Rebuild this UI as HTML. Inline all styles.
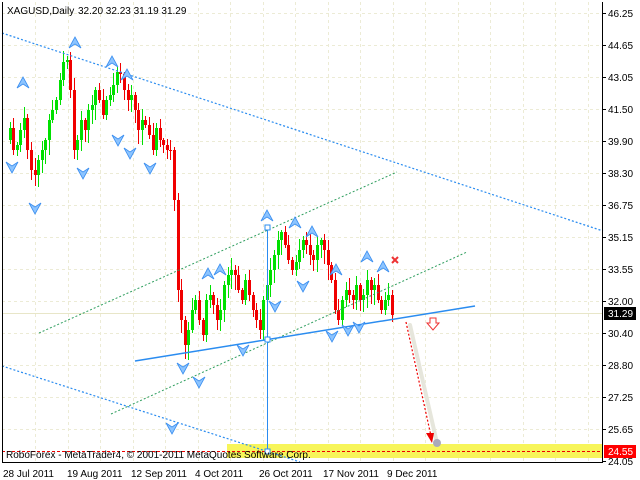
<!DOCTYPE html>
<html><head><meta charset="utf-8"><style>
html,body{margin:0;padding:0;background:#fff;width:640px;height:480px;overflow:hidden}
svg{display:block}
text{font-family:"Liberation Sans",Tahoma,sans-serif;font-size:10px;fill:#000}
</style></head><body>
<svg id="s" width="640" height="480" xmlns="http://www.w3.org/2000/svg">
<rect width="640" height="480" fill="#fff"/>
<g id="grid" stroke="#ecebd5" stroke-dasharray="3,3" stroke-width="1"></g>
<rect x="227" y="444" width="376" height="14" fill="#f7f55a"/>
<line x1="2" y1="451.5" x2="603" y2="451.5" stroke="#e00" stroke-dasharray="3,2"/>
<line x1="2" y1="313.5" x2="603" y2="313.5" stroke="#e8e6c8"/>
<g id="candles"></g>
<line x1="2" y1="33" x2="603" y2="231" stroke="#2a8cf0" stroke-dasharray="2,2" stroke-width="1.2"/>
<line x1="2" y1="366" x2="300" y2="462" stroke="#2a8cf0" stroke-dasharray="2,2" stroke-width="1.2"/>
<line x1="39" y1="333" x2="397" y2="172" stroke="#2e9e5e" stroke-dasharray="2,2"/>
<line x1="111" y1="414" x2="467" y2="252" stroke="#2e9e5e" stroke-dasharray="2,2"/>
<line x1="135" y1="361" x2="475" y2="306" stroke="#2a8cf0" stroke-width="1.5"/>
<line x1="267.5" y1="227" x2="267.5" y2="451" stroke="#2a8cf0" stroke-width="1"/>
<rect x="265" y="225" width="5" height="5" fill="#fff" stroke="#2a8cf0"/>
<rect x="265" y="337" width="5" height="5" fill="#fff" stroke="#2a8cf0"/>
<rect x="265" y="449" width="5" height="5" fill="#fff" stroke="#2a8cf0"/>
<g id="fr"></g>
<line x1="410" y1="325" x2="437" y2="443" stroke="#e6e6dc" stroke-width="4" stroke-linecap="round"/>
<circle cx="437" cy="443" r="4" fill="#aab"/>
<line x1="406" y1="322" x2="431" y2="436" stroke="#e00" stroke-dasharray="2,2" stroke-width="1.2"/>
<path d="M426,433 L434,433 L432,443 Z" fill="#e00"/>
<path d="M430,318 h6 v5 h3 l-6,7 l-6,-7 h3 z" fill="#fff" stroke="#e33"/>
<path d="M392,257 l6,6 M398,257 l-6,6" stroke="#e33" stroke-width="2"/>
<line x1="2.5" y1="2" x2="2.5" y2="462" stroke="#000"/>
<line x1="2" y1="462.5" x2="603" y2="462.5" stroke="#000"/>
<line x1="602.5" y1="2" x2="602.5" y2="463" stroke="#000"/>
<g id="ax"></g>
<rect x="604" y="307" width="32" height="13" fill="#000"/>
<text x="608" y="317" style="fill:#fff">31.29</text>
<rect x="604" y="445" width="32" height="13" fill="#f00"/>
<text x="608" y="455" style="fill:#fff">24.55</text>
<text x="7" y="14">XAGUSD,Daily</text>
<text x="78" y="14">32.20 32.23 31.19 31.29</text>
<text x="6" y="458">RoboForex - MetaTrader4, © 2001-2011 MetaQuotes Software Corp.</text>
<text x="3" y="477">28 Jul 2011</text>
<text x="67" y="477">19 Aug 2011</text>
<text x="131" y="477">12 Sep 2011</text>
<text x="195" y="477">4 Oct 2011</text>
<text x="259" y="477">26 Oct 2011</text>
<text x="323" y="477">17 Nov 2011</text>
<text x="387" y="477">9 Dec 2011</text>
</svg>
<script>
(function(){
var NS="http://www.w3.org/2000/svg";
function el(p,t,a){var e=document.createElementNS(NS,t);for(var k in a)e.setAttribute(k,a[k]);p.appendChild(e);return e;}
var g=document.getElementById("grid");
for(var x=35;x<600;x+=32.5)el(g,"line",{x1:Math.round(x)+.5,y1:2,x2:Math.round(x)+.5,y2:462});
var prices=["46.25","44.65","43.05","41.50","39.90","38.30","36.75","35.15","33.55","32.00","30.40","28.80","27.25","25.65","24.05"];
var ax=document.getElementById("ax");
prices.forEach(function(p,i){var y=13+i*32;
 if(i<14)el(g,"line",{x1:2,y1:y+.5,x2:602,y2:y+.5});
 el(ax,"line",{x1:603,y1:y+.5,x2:606,y2:y+.5,stroke:"#000"});
 var t=el(ax,"text",{x:608,y:y+4});t.textContent=p;});
var c=[140,128,150,145,130,118,150,170,175,160,150,140,120,110,100,80,62,60,90,150,140,120,130,110,105,90,100,115,100,95,85,72,74,90,100,95,110,130,120,125,135,150,128,140,145,150,150,200,290,320,345,330,310,300,320,335,300,295,305,320,310,285,275,270,275,290,300,280,295,310,320,330,300,285,270,255,240,232,245,260,270,262,250,240,245,255,260,245,240,250,265,280,310,320,300,290,295,300,285,300,295,280,290,285,300,310,300,295,315];
var cg=document.getElementById("candles");var n=c.length;var step=(392-6)/(n-1);
for(var i=1;i<n;i++){var o=c[i-1],cl=c[i];var x=Math.round(6+i*step);
 var up=cl<o;var col=up?"#00e000":"#f00000";var tp=Math.min(o,cl),bt=Math.max(o,cl);
 var w1=((i*37)%11)+2,w2=((i*53)%13)+3;
 el(cg,"line",{x1:x+.5,y1:tp-w1,x2:x+.5,y2:bt+w2,stroke:col});
 el(cg,"rect",{x:x-1,y:tp,width:3,height:Math.max(1,bt-tp),fill:col});}
var fr=document.getElementById("fr");
var ups=[[23,83],[75,43],[112,62],[127,75],[267,216],[295,223],[312,232],[208,274],[220,270],[336,270],[367,257],[383,267]];
var dns=[[12,167],[35,208],[83,173],[118,140],[130,153],[150,168],[183,368],[199,382],[172,428],[243,350],[275,306],[303,286],[332,336],[348,330],[359,327]];
ups.forEach(function(p){el(fr,"path",{d:"M"+(p[0]-6)+","+(p[1]+5)+" L"+p[0]+","+(p[1]-6)+" L"+(p[0]+6)+","+(p[1]+5)+" L"+p[0]+","+(p[1]+1)+" Z",fill:"#8cc4ff",stroke:"#3a8ef0","stroke-width":"0.8"});});
dns.forEach(function(p){el(fr,"path",{d:"M"+(p[0]-6)+","+(p[1]-5)+" L"+p[0]+","+(p[1]+6)+" L"+(p[0]+6)+","+(p[1]-5)+" L"+p[0]+","+(p[1]-1)+" Z",fill:"#8cc4ff",stroke:"#3a8ef0","stroke-width":"0.8"});});
})();
</script>
</body></html>
